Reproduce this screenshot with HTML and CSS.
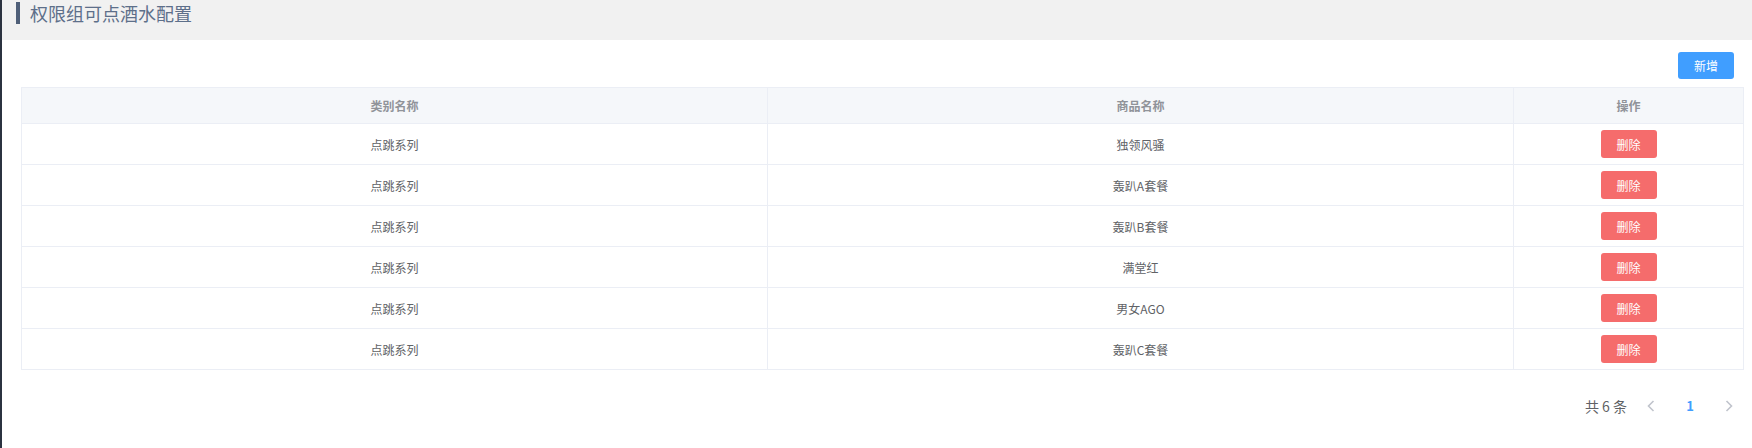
FILE: index.html
```html
<!DOCTYPE html>
<html>
<head>
    <title>权限组可点酒水配置</title>
    <link rel="stylesheet" href="styles.css">
</head>
<body>
    <div class="layout">
        <div class="sidebar"></div>
        <div class="main">
            <div class="page-head">
                <span class="head-bar"></span>
                <span class="head-title">权限组可点酒水配置</span>
            </div>
            <div class="content">
                <div class="toolbar">
                    <button class="btn btn-primary">新增</button>
                </div>
                <table class="grid">
                    <colgroup>
                        <col class="col-a">
                        <col class="col-b">
                        <col class="col-c">
                    </colgroup>
                    <thead>
                        <tr><th>类别名称</th><th>商品名称</th><th>操作</th></tr>
                    </thead>
                    <tbody>
                        <tr><td>点跳系列</td><td>独领风骚</td><td><button class="btn btn-danger">删除</button></td></tr>
                        <tr><td>点跳系列</td><td>轰趴A套餐</td><td><button class="btn btn-danger">删除</button></td></tr>
                        <tr><td>点跳系列</td><td>轰趴B套餐</td><td><button class="btn btn-danger">删除</button></td></tr>
                        <tr><td>点跳系列</td><td>满堂红</td><td><button class="btn btn-danger">删除</button></td></tr>
                        <tr><td>点跳系列</td><td>男女AGO</td><td><button class="btn btn-danger">删除</button></td></tr>
                        <tr><td>点跳系列</td><td>轰趴C套餐</td><td><button class="btn btn-danger">删除</button></td></tr>
                    </tbody>
                </table>
                <div class="pager">
                    <span class="total">共 6 条</span>
                    <span class="pg-btn pg-arrow">
                        <svg width="8" height="12" viewBox="0 0 8 12"><path d="M6.5 1 L1.5 6 L6.5 11" fill="none" stroke="#c0c4cc" stroke-width="1.6"/></svg>
                    </span>
                    <span class="pg-btn pg-active">1</span>
                    <span class="pg-btn pg-arrow">
                        <svg width="8" height="12" viewBox="0 0 8 12"><path d="M1.5 1 L6.5 6 L1.5 11" fill="none" stroke="#c0c4cc" stroke-width="1.6"/></svg>
                    </span>
                </div>
            </div>
        </div>
    </div>
</body>
</html>
```

FILE: styles.css
```css
body {
    margin: 0;
    font-family: "Noto Sans CJK SC", "Noto Sans", sans-serif;
    background: #fff;
}
.layout {
    display: flex;
    height: 448px;
}
.sidebar {
    width: 2px;
    background: #2b3240;
}
.main {
    flex: 1;
}
.page-head {
    height: 40px;
    background: #f1f1f1;
    display: flex;
    align-items: flex-start;
    padding-left: 14px;
}
.head-bar {
    width: 4px;
    height: 22px;
    margin-top: 2px;
    background: #4f5f78;
}
.head-title {
    margin-left: 10px;
    font-size: 18px;
    line-height: 26px;
    color: #5d6f8a;
}
.content {
    padding: 12px 8px 0 19px;
}
.toolbar {
    display: flex;
    justify-content: flex-end;
    padding-right: 10px;
    margin-bottom: 8px;
}
.btn {
    border: none;
    border-radius: 3px;
    color: #fff;
    font-family: inherit;
    font-size: 12px;
    width: 56px;
    height: 27px;
    padding: 0;
    cursor: pointer;
}
.btn-primary {
    background: #409eff;
}
.btn-danger {
    background: #f56c6c;
    height: 28px;
}
.grid {
    width: 1723px;
    border-collapse: collapse;
    table-layout: fixed;
    border: 1px solid #ebeef5;
    font-size: 12px;
}
.col-a, .col-b {
    width: 746px;
}
.grid th, .grid td {
    border: 1px solid #ebeef5;
    text-align: center;
    padding: 0;
}
.grid th {
    height: 35px;
    background: #f5f7fa;
    color: #909399;
    font-weight: bold;
}
.grid td {
    height: 40px;
    color: #606266;
}
.pager {
    display: flex;
    justify-content: flex-end;
    align-items: center;
    margin-top: 22px;
    font-size: 13px;
    height: 28px;
}
.total {
    color: #606266;
    font-size: 14px;
}
.pg-btn {
    width: 30px;
    margin-left: 9px;
    text-align: center;
    line-height: 28px;
}
.pg-arrow {
    display: flex;
    justify-content: center;
    align-items: center;
    height: 28px;
}
.pg-active {
    color: #409eff;
    font-weight: bold;
}
```
